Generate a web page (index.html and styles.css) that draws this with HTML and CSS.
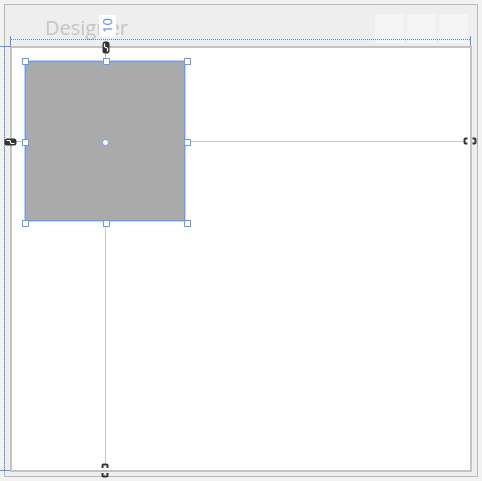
FILE: index.html
```html
<!DOCTYPE html>
<html lang="en">
<head>
  <meta charset="UTF-8">
  <title>Designer</title>
  <link rel="stylesheet" href="styles.css">
</head>
<body>
<div class="window">
  <div class="header">
    <span class="title">Designer</span>
    <div class="tools">
      <div class="tool"></div>
      <div class="tool"></div>
      <div class="tool"></div>
    </div>
  </div>
  <div class="canvas"></div>
</div>

<div class="overlay">
  <!-- guides -->
  <div class="guide-top"></div>
  <div class="guide-left"></div>
  <div class="mark mark-tl-v"></div>
  <div class="mark mark-tl-h"></div>
  <div class="mark mark-tr-v"></div>
  <div class="mark mark-bl-h"></div>

  <!-- constraints -->
  <div class="line line-right"></div>
  <div class="line line-bottom"></div>
  <div class="tie tie-left"></div>
  <div class="tie tie-top"></div>

  <div class="label">10</div>

  <svg class="chain chain-top" width="8" height="13" viewBox="0 0 8 13">
    <rect x="0.5" y="0.5" width="7" height="12" rx="2.5" fill="#333"/>
    <path d="M2.5 2.5 V6 M5.5 7 V10.5 M2.5 6 L5.5 7" stroke="#fff" stroke-width="1.2" fill="none"/>
  </svg>
  <svg class="chain chain-left" width="13" height="8" viewBox="0 0 13 8">
    <rect x="0.5" y="0.5" width="12" height="7" rx="2.5" fill="#333"/>
    <path d="M2.5 2.5 H6 M7 5.5 H10.5 M6 2.5 L7 5.5" stroke="#fff" stroke-width="1.2" fill="none"/>
  </svg>
  <svg class="chain chain-right" width="14" height="8" viewBox="0 0 14 8">
    <path d="M4.5 1.5 H2.5 Q1.5 1.5 1.5 2.5 V5.5 Q1.5 6.5 2.5 6.5 H4.5" stroke="#333" stroke-width="2" fill="none"/>
    <path d="M9.5 1.5 H11.5 Q12.5 1.5 12.5 2.5 V5.5 Q12.5 6.5 11.5 6.5 H9.5" stroke="#333" stroke-width="2" fill="none"/>
  </svg>
  <svg class="chain chain-bottom" width="8" height="15" viewBox="0 0 8 15">
    <path d="M1.5 5 V2.5 Q1.5 1.5 2.5 1.5 H5.5 Q6.5 1.5 6.5 2.5 V5" stroke="#333" stroke-width="2" fill="none"/>
    <path d="M1.5 10 V12.5 Q1.5 13.5 2.5 13.5 H5.5 Q6.5 13.5 6.5 12.5 V10" stroke="#333" stroke-width="2" fill="none"/>
  </svg>

  <!-- selected element -->
  <div class="box"></div>
  <div class="handle" style="left: 22px; top: 58px;"></div>
  <div class="handle" style="left: 103px; top: 58px;"></div>
  <div class="handle" style="left: 184px; top: 58px;"></div>
  <div class="handle" style="left: 22px; top: 139px;"></div>
  <div class="handle" style="left: 184px; top: 139px;"></div>
  <div class="handle" style="left: 22px; top: 220px;"></div>
  <div class="handle" style="left: 103px; top: 220px;"></div>
  <div class="handle" style="left: 184px; top: 220px;"></div>
  <div class="center"></div>
</div>
</body>
</html>
```

FILE: styles.css
```css
body {
  margin: 0;
  background-color: #f2f2f2;
  font-family: "Open Sans", "Noto Sans", sans-serif;
}

.window {
  margin: 4px 0 0 4px;
  width: 474px;
  height: 473px;
  box-sizing: border-box;
  border: 1px solid #b9b9b9;
  background-color: #eeeeee;
}

.header {
  display: flex;
  justify-content: space-between;
  align-items: flex-start;
  height: 41px;
  box-sizing: border-box;
  padding: 9px 9px 0 40px;
}

.title {
  font-size: 20px;
  line-height: 28px;
  color: #c6c6c6;
}

.tools {
  display: flex;
  gap: 3px;
}

.tool {
  width: 29px;
  height: 29px;
  background-color: #f5f5f5;
}

.canvas {
  margin-left: 5px;
  width: 462px;
  height: 426px;
  box-sizing: border-box;
  border: 2px solid #c3c3c3;
  background-color: #fff;
}

.overlay {
  position: absolute;
  left: 0;
  top: 0;
  width: 482px;
  height: 481px;
}

.overlay > * {
  position: absolute;
}

.guide-top {
  left: 11px;
  top: 39px;
  width: 459px;
  border-top: 1px dotted #4f86ee;
}

.guide-left {
  left: 4px;
  top: 47px;
  height: 423px;
  border-left: 1px dotted #4f86ee;
}

.mark {
  background-color: #5b8ff0;
}

.mark-tl-v { left: 10px; top: 36px; width: 1px; height: 11px; }
.mark-tl-h { left: 0; top: 46px; width: 10px; height: 1px; }
.mark-tr-v { left: 470px; top: 36px; width: 1px; height: 10px; }
.mark-bl-h { left: 0; top: 470px; width: 10px; height: 1px; }

.line {
  background-color: #c8c8c8;
}

.line-right { left: 189px; top: 141px; width: 274px; height: 1px; }
.line-bottom { left: 105px; top: 225px; width: 1px; height: 238px; }

.tie {
  background-color: #a9c4f7;
}

.tie-left { left: 17px; top: 141px; width: 5px; height: 1px; }
.tie-top { left: 105px; top: 53px; width: 1px; height: 5px; }

.label {
  left: 99px;
  top: 15px;
  width: 17px;
  height: 22px;
  background-color: #fff;
  color: #4f86ee;
  font-size: 13px;
  line-height: 17px;
  writing-mode: vertical-rl;
  transform: rotate(180deg);
  text-align: center;
}

.chain-top { left: 102px; top: 41px; }
.chain-left { left: 4px; top: 138px; }
.chain-right { left: 463px; top: 137px; }
.chain-bottom { left: 101px; top: 463px; }

.box {
  left: 25px;
  top: 61px;
  width: 160px;
  height: 160px;
  box-sizing: border-box;
  border: 1px solid #6b9bf0;
  box-shadow: 0 0 0 1px #bfd3fa;
  background-color: #aaaaaa;
}

.handle {
  width: 5px;
  height: 5px;
  border: 1px solid #6b9bf0;
  background-color: #fff;
}

.center {
  left: 102px;
  top: 139px;
  width: 5px;
  height: 5px;
  border: 1px solid #6b9bf0;
  border-radius: 50%;
  background-color: #fff;
}
```
